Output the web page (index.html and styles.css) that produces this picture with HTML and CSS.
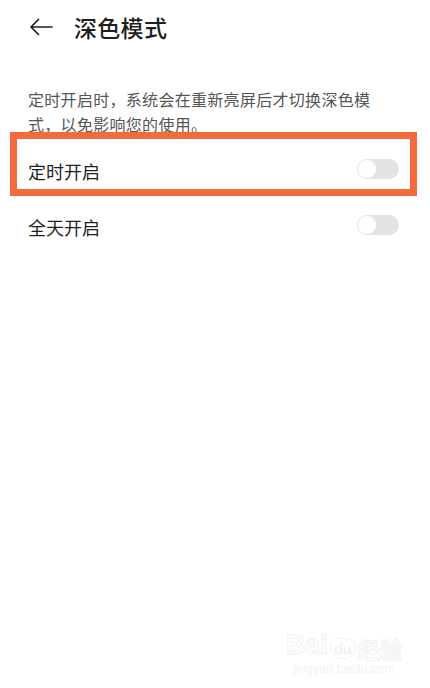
FILE: index.html
```html
<!DOCTYPE html>
<html lang="zh-CN">
<head>
<meta charset="utf-8">
<title>深色模式</title>
<link rel="stylesheet" href="styles.css">
</head>
<body>
<div class="screen">
  <header class="topbar">
    <svg class="back" width="24" height="18" viewBox="0 0 24 18" aria-hidden="true">
      <path d="M23 9H2M9.5 1.5L2 9l7.5 7.5" fill="none" stroke="#1f1f1f" stroke-width="1.7" stroke-linecap="round" stroke-linejoin="round"/>
    </svg>
    <h1 class="title">深色模式</h1>
  </header>

  <p class="note">定时开启时，系统会在重新亮屏后才切换深色模式，以免影响您的使用。</p>

  <div class="row row-marked">
    <span class="label">定时开启</span>
    <span class="switch"><span class="knob"></span></span>
    <span class="mark"></span>
  </div>
  <div class="row">
    <span class="label">全天开启</span>
    <span class="switch"><span class="knob"></span></span>
  </div>

  <div class="spacer"></div>

  <footer class="stamp">
    <div class="stamp-logo"><span class="bai">Bai</span><span class="du">du</span><span class="jy">经验</span></div>
    <div class="stamp-url">jingyan.baidu.com</div>
  </footer>
</div>
</body>
</html>
```

FILE: styles.css
```css
html, body {
  margin: 0;
  padding: 0;
  background: #ffffff;
}

body {
  font-family: "Noto Sans CJK SC", "Noto Sans", sans-serif;
  color: #1f1f1f;
}

.screen {
  width: 430px;
  height: 688px;
  display: flex;
  flex-direction: column;
  overflow: hidden;
}

.topbar {
  height: 56px;
  display: flex;
  align-items: center;
  padding-left: 29px;
  gap: 21px;
}

.back {
  display: block;
  margin-top: -3px;
}

.title {
  margin: 0;
  font-size: 23px;
  font-weight: 500;
  line-height: 1;
  margin-top: -2px;
  letter-spacing: 0.3px;
}

.note {
  margin: 31px 0 0;
  padding: 0 52px 0 28px;
  font-size: 16px;
  line-height: 25px;
  letter-spacing: 0.3px;
  color: #555555;
}

.row {
  position: relative;
  height: 56px;
  display: flex;
  align-items: center;
  justify-content: space-between;
  padding: 0 31px 0 28px;
}

.row-marked {
  margin-top: 5px;
}

.label {
  font-size: 18px;
  line-height: 1;
  color: #1f1f1f;
  margin-top: 2px;
}

.switch {
  position: relative;
  width: 42px;
  height: 20px;
  border-radius: 10px;
  background: #e3e3e3;
  margin-top: -2px;
}

.knob {
  position: absolute;
  left: 1px;
  top: 1px;
  width: 18px;
  height: 18px;
  border-radius: 50%;
  background: #ffffff;
  box-shadow: 0 0 0 1px #e9e9e9;
}

/* orange highlight frame drawn over the first row */
.mark {
  position: absolute;
  left: 10px;
  top: -10px;
  width: 407px;
  height: 64px;
  box-sizing: border-box;
  border: 7px solid #f36b3c;
  pointer-events: none;
}

.spacer {
  flex: 1;
}

.stamp {
  align-self: flex-end;
  margin: 0 28px 12px 0;
  text-align: center;
  font-family: "Liberation Sans", sans-serif;
}

.stamp-logo {
  display: flex;
  align-items: flex-end;
  font-weight: 700;
  line-height: 1;
}

.bai {
  font-size: 27px;
  color: #ffffff;
  -webkit-text-stroke: 1px #f1f1f1;
}

.du {
  font-size: 15px;
  margin-left: 2px;
  padding: 2px 3px;
  border: 1px solid #f1f1f1;
  border-radius: 9px 9px 12px 12px;
  color: #f1f1f1;
}

.jy {
  font-family: "Noto Sans CJK SC", sans-serif;
  font-size: 22px;
  color: #ffffff;
  -webkit-text-stroke: 1px #f1f1f1;
  margin-left: 2px;
}

.stamp-url {
  font-size: 12px;
  color: #f2f2f2;
  margin-top: 3px;
  letter-spacing: 0.3px;
}
```
